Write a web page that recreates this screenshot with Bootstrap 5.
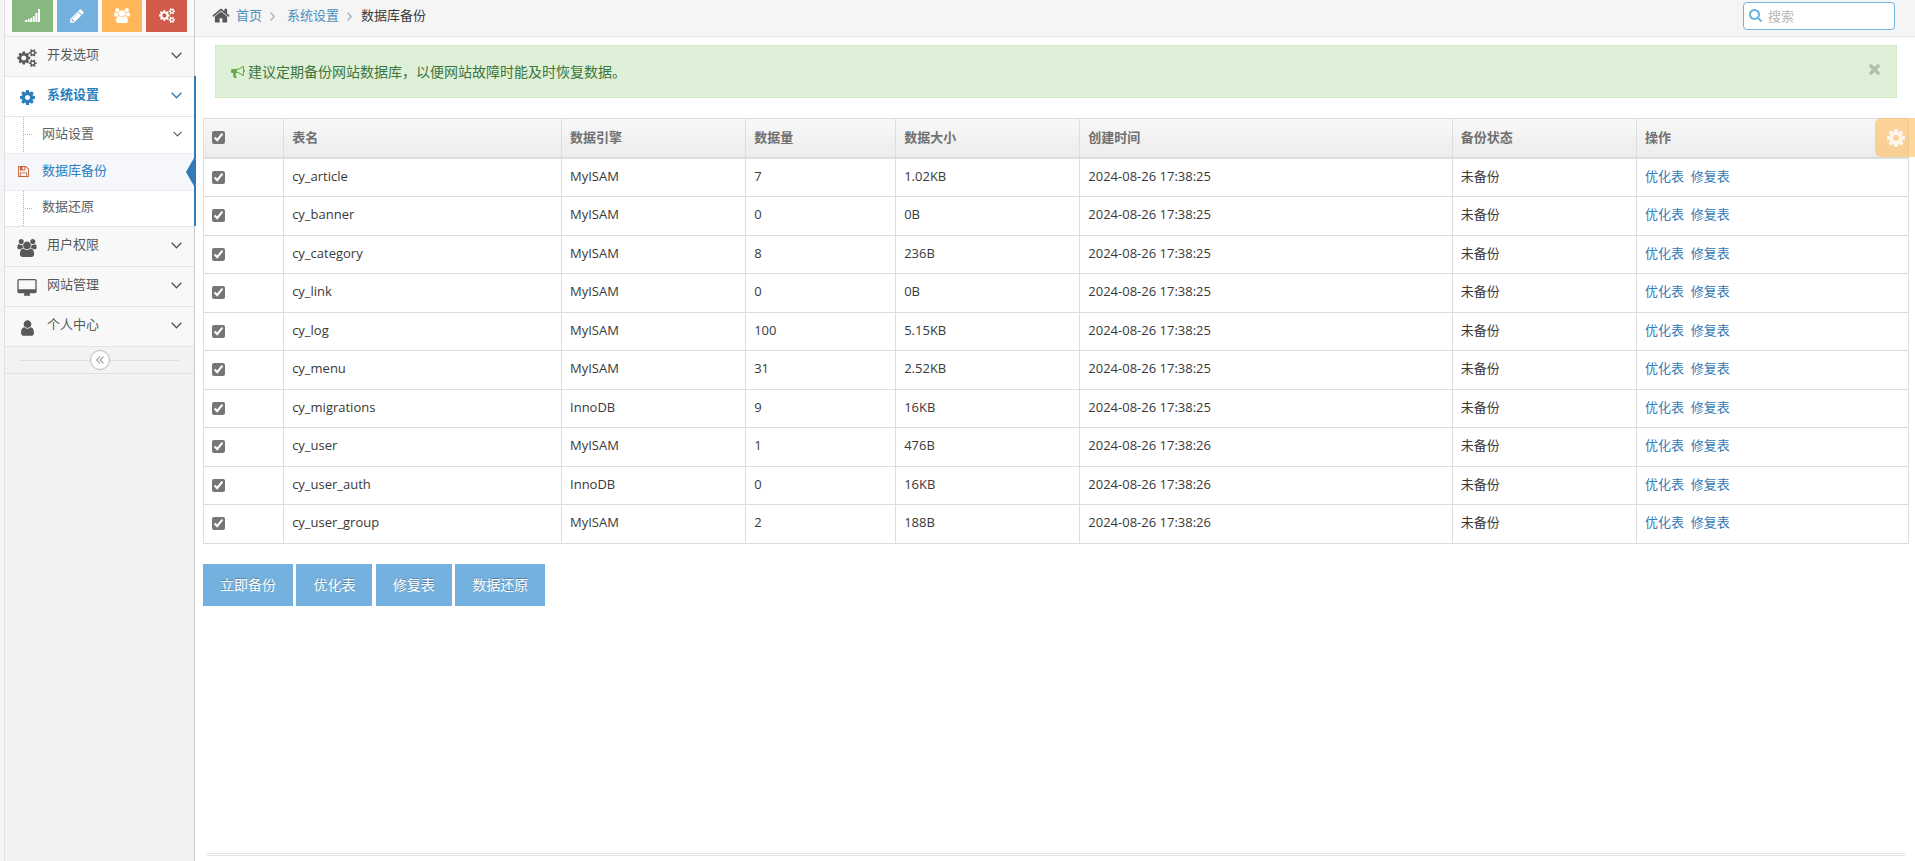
<!DOCTYPE html>
<html lang="zh-CN">
<head>
<meta charset="utf-8">
<meta name="viewport" content="width=device-width, initial-scale=1">
<title>数据库备份</title>
<link href="https://cdn.jsdelivr.net/npm/bootstrap@5.3.0/dist/css/bootstrap.min.css" rel="stylesheet">
<style>
body{font-family:"Open Sans","Noto Sans CJK SC",sans-serif;font-size:13px;line-height:1.5;color:#393939;background:#fff}
a{text-decoration:none;color:#337ab7}
svg{display:block;fill:currentColor;flex:none}
.sidebar{width:195px;flex:none;padding-left:4px;background:#f5f5f5}
.side-inner{min-height:100vh;background:#f2f2f2;border:solid #ccc;border-width:0 1px 0 0;box-shadow:inset 1px 0 #e0e0e0;padding-left:1px}
.shortcuts{height:37px;padding:0 7px;background:#fafafa;border-bottom:1px solid #e5e5e5;gap:4px}
.shortcuts button{width:41px;height:32px;border:0;border-radius:0;padding:0 0 1px;color:#fff;display:flex;align-items:center;justify-content:center}
.sc-green{background:#87b87f}
.sc-blue{background:#75b1de}
.sc-orange{background:#ffb75a}
.sc-red{background:#d15b4a}
.menu-link{height:39px;padding:0 12px 4px 11px;background:#f8f8f8;color:#585858}
.menu-item{border-bottom:1px solid #e5e5e5}
.menu-icon{width:22px;margin-right:9px;display:flex;justify-content:center;padding-top:6px}
.menu-link>svg{margin-top:2px}
.menu-item.open{position:relative}
.menu-item.open::after{content:"";position:absolute;right:-2px;top:-1px;bottom:0;width:2px;background:#337ab7}
.menu-item.open>.menu-link{background:#fff;color:#2b7dbc;font-weight:700}
.submenu{background:#fff;border-top:1px solid #e5e5e5;position:relative}
.submenu::before{content:"";position:absolute;left:18px;top:0;bottom:0;border-left:1px dotted #9dbdd6}
.submenu li{height:37px;position:relative;border-bottom:1px dotted #d5dde5}
.submenu li:last-child{height:35px;border-bottom:0}
.submenu li:not(.active)::before{content:"";position:absolute;left:20px;top:17px;width:7px;border-top:1px dotted #9dbdd6}
.submenu a{height:100%;padding:0 12px 3px 37px;color:#616161}
.submenu .active{background:#f5f7fa}
.submenu .active a{color:#2b7dbc}
.submenu .active svg{position:absolute;left:13px;top:12px;color:#c86139}
.submenu .active::after{content:"";position:absolute;right:0;top:4px;border:solid transparent;border-width:14px 8px 14px 0;border-right-color:#337ab7}
.collapse-bar{height:27px;padding:0 15px;border-bottom:1px solid #e0e0e0}
.collapse-bar::before,.collapse-bar::after{content:"";flex:1;border-top:1px solid #e0e0e0}
.collapse-bar button{width:20px;height:20px;padding:0;border:1px solid #bbb;border-radius:50%;background:#fff;color:#aaa;display:flex;align-items:center;justify-content:center}
.topbar{height:37px;background:#f5f5f5;border-bottom:1px solid #e5e5e5;padding:0 20px 5px 17px}
.topbar a{color:#4c8fbd}
.home-icon{color:#585858;margin-right:6px}
.crumb-sep{color:#b2b6bf;margin:2px 12px 0 8px}
.crumb-sep.last{margin-right:9px}
.searchbox{width:152px}
.searchbox input{width:100%;height:28px;border:1px solid #6fb3e0;border-radius:4px;padding:0 6px 0 24px;font-size:13px;color:#666;background:#fff;outline:0}
.searchbox input::placeholder{color:#b8b8b8}
.searchbox svg{position:absolute;left:6px;top:7px;color:#6fb3e0}
.notice{margin:8px 18px 20px 20px;padding:15px;border:1px solid #d6e9c6;background:#dff0d8;color:#3c763d;font-size:14px;line-height:21px}
.notice-icon{color:#69aa46;margin-right:3px}
.notice button{border:0;background:none;padding:0 1px 4px;color:#b2c0ad}
.content{padding:0 6px 0 8px}
.backup{table-layout:fixed;border-collapse:collapse;width:100%}
.backup th,.backup td{border:1px solid #ddd;padding:9px 8px;white-space:nowrap}
.backup td{padding:8px 8px 10px}
.backup thead tr{background:linear-gradient(#f8f8f8,#ececec);color:#707070}
.backup th{border-bottom-width:2px;font-weight:700}
.backup input{width:13px;height:13px;margin:0;display:block;accent-color:#767676}
.backup td input{margin-top:2px}
.settings{position:absolute;right:0;top:0;width:40px;height:39px;border:0;border-radius:6px 0 0 6px;background:rgba(255,180,75,.55);color:#fbf5ec;display:flex;align-items:center;padding:0 0 0 12px}
.actions{padding-top:20px}
.actions button{height:42px;padding:0 17px;border:0;border-radius:0;background:#75b1de;color:#fff;font-size:14px;line-height:22px;text-shadow:0 -1px 0 rgba(0,0,0,.25)}
.foot{margin:0 10px 0 12px;height:8px;border-top:3px double #e5e5e5}
</style>
</head>
<body>
<svg class="d-none" aria-hidden="true">
<symbol id="pencil" viewBox="0 0 1792 1792"><path d="M491 1536l91-91-235-235-91 91v107h128v128h107zm523-928q0-22-22-22-10 0-17 7l-542 542q-7 7-7 17 0 22 22 22 10 0 17-7l542-542q7-7 7-17zm-54-192l416 416-832 832h-416v-416zm683 96q0 53-37 90l-166 166-416-416 166-165q36-38 90-38 53 0 91 38l235 234q37 39 37 91z"/></symbol>
<symbol id="users" viewBox="-64 0 1920 1792"><path d="M529 896q-162 5-265 128h-134q-82 0-138-40.500t-56-118.500q0-353 124-353 6 0 43.500 21t97.500 42.500 119 21.500q67 0 133-23-5 37-5 66 0 139 81 256zm1071 637q0 120-73 189.500t-194 69.500h-874q-121 0-194-69.500t-73-189.500q0-53 3.500-103.500t14-109 26.500-108.500 43-97.500 62-81 85.500-53.500 111.500-20q10 0 43 21.500t73 48 107 48 135 21.500 135-21.500 107-48 73-48 43-21.500q61 0 111.500 20t85.500 53.500 62 81 43 97.500 26.500 108.500 14 109 3.500 103.500zm-1024-1277q0 106-75 181t-181 75-181-75-75-181 75-181 181-75 181 75 75 181zm704 384q0 159-112.500 271.500t-271.500 112.500-271.500-112.500-112.500-271.500 112.500-271.500 271.500-112.500 271.500 112.500 112.500 271.500zm576 225q0 78-56 118.500t-138 40.500h-134q-103-123-265-128 81-117 81-256 0-29-5-66 66 23 133 23 59 0 119-21.500t97.500-42.500 43.500-21q124 0 124 353zm-128-609q0 106-75 181t-181 75-181-75-75-181 75-181 181-75 181 75 75 181z"/></symbol>
<symbol id="cogs" viewBox="-64 0 1920 1792"><path d="M832 896q0-106-75-181t-181-75-181 75-75 181 75 181 181 75 181-75 75-181zm768 512q0-52-38-90t-90-38-90 38-38 90q0 53 37.500 90.500t90.500 37.500 90.500-37.500 37.500-90.500zm0-1024q0-52-38-90t-90-38-90 38-38 90q0 53 37.500 90.500t90.500 37.500 90.500-37.500 37.500-90.500zm-384 421v185q0 10-7 19.500t-16 10.500l-155 24q-11 35-32 76 34 48 90 115 7 11 7 20 0 12-7 19-23 30-82.500 89.500t-78.500 59.500q-11 0-21-7l-115-90q-37 19-77 31-11 108-23 155-7 24-30 24h-186q-11 0-20-7.500t-10-17.500l-23-153q-34-10-75-31l-118 89q-7 7-20 7-11 0-21-8-144-133-144-160 0-9 7-19 10-14 41-53t47-61q-23-44-35-82l-152-24q-10-1-17-9.500t-7-19.500v-185q0-10 7-19.500t16-10.500l155-24q11-35 32-76-34-48-90-115-7-11-7-20 0-12 7-20 22-30 82-89t79-59q11 0 21 7l115 90q34-18 77-32 11-108 23-154 7-24 30-24h186q11 0 20 7.500t10 17.500l23 153q34 10 75 31l118-89q8-7 20-7 11 0 21 8 144 133 144 160 0 8-7 19-12 16-42 54t-45 60q23 48 34 82l152 23q10 2 17 10.500t7 19.500zm640 533v140q0 16-149 31-12 27-30 52 51 113 51 138 0 4-4 7-122 71-124 71-8 0-46-47t-52-68q-20 2-30 2t-30-2q-14 21-52 68t-46 47q-2 0-124-71-4-3-4-7 0-25 51-138-18-25-30-52-149-15-149-31v-140q0-16 149-31 13-29 30-52-51-113-51-138 0-4 4-7 4-2 35-20t59-34 30-16q8 0 46 46.500t52 67.500q20-2 30-2t30 2q51-71 92-112l6-2q4 0 124 70 4 3 4 7 0 25-51 138 17 23 30 52 149 15 149 31zm0-1024v140q0 16-149 31-12 27-30 52 51 113 51 138 0 4-4 7-122 71-124 71-8 0-46-47t-52-68q-20 2-30 2t-30-2q-14 21-52 68t-46 47q-2 0-124-71-4-3-4-7 0-25 51-138-18-25-30-52-149-15-149-31v-140q0-16 149-31 13-29 30-52-51-113-51-138 0-4 4-7 4-2 35-20t59-34 30-16q8 0 46 46.500t52 67.500q20-2 30-2t30 2q51-71 92-112l6-2q4 0 124 70 4 3 4 7 0 25-51 138 17 23 30 52 149 15 149 31z"/></symbol>
<symbol id="cog" viewBox="128 128 1536 1536"><path d="M1152 896q0-106-75-181t-181-75-181 75-75 181 75 181 181 75 181-75 75-181zm512-109v222q0 12-8 23t-20 13l-185 28q-19 54-39 91 35 50 107 138 10 12 10 25t-9 23q-27 37-99 108t-94 71q-12 0-26-9l-138-108q-44 23-91 38-16 136-29 186-7 28-36 28h-222q-14 0-24.500-8.500t-11.500-21.500l-28-184q-49-16-90-37l-141 107q-10 9-25 9-14 0-25-11-126-114-165-168-7-10-7-23 0-12 8-23 15-21 51-66.500t54-70.500q-27-50-41-99l-183-27q-13-2-21-12.500t-8-23.500v-222q0-12 8-23t19-13l186-28q14-46 39-92-40-57-107-138-10-12-10-24 0-10 9-23 26-36 98.500-107.500t94.500-71.500q13 0 26 10l138 107q44-23 91-38 16-136 29-186 7-28 36-28h222q14 0 24.500 8.500t11.500 21.500l28 184q49 16 90 37l142-107q9-9 24-9 13 0 25 10 129 119 165 170 7 8 7 22 0 12-8 23-15 21-51 66.500t-54 70.500q26 50 41 98l183 28q13 2 21 12.500t8 23.500z"/></symbol>
<symbol id="desktop" viewBox="-64 0 1920 1792"><path d="M1728 992v-832q0-13-9.500-22.500t-22.500-9.500h-1600q-13 0-22.500 9.500t-9.500 22.500v832q0 13 9.500 22.500t22.500 9.500h1600q13 0 22.500-9.500t9.500-22.500zm128-832v1088q0 66-47 113t-113 47h-544q0 37 16 77.500t32 71 16 43.500q0 26-19 45t-45 19h-512q-26 0-45-19t-19-45q0-14 16-44t32-70 16-78h-544q-66 0-113-47t-47-113v-1088q0-66 47-113t113-47h1600q66 0 113 47t47 113z"/></symbol>
<symbol id="user" viewBox="0 0 1792 1792"><path d="M1536 1399q0 109-62.500 187t-150.500 78h-854q-88 0-150.500-78t-62.500-187q0-85 8.500-160.500t31.500-152 58.500-131 94-89 134.500-34.500q131 128 313 128t313-128q76 0 134.500 34.500t94 89 58.500 131 31.500 152 8.500 160.500zm-256-887q0 159-112.500 271.500t-271.500 112.500-271.500-112.500-112.500-271.500 112.500-271.500 271.500-112.500 271.500 112.500 112.500 271.500z"/></symbol>
<symbol id="home" viewBox="64 180 1664 1408"><path d="M1472 992v480q0 26-19 45t-45 19h-384v-384h-256v384h-384q-26 0-45-19t-19-45v-480q0-1 .5-3t.5-3l575-474 575 474q1 2 1 6zm223-69l-62 74q-8 9-21 11h-3q-13 0-21-7l-692-577-692 577q-12 8-24 7-13-2-21-11l-62-74q-8-10-7-23.500t11-21.500l719-599q32-26 76-26t76 26l244 204v-195q0-14 9-23t23-9h192q14 0 23 9t9 23v408l219 182q10 8 11 21.500t-7 23.500z"/></symbol>
<symbol id="floppy" viewBox="128 128 1536 1536"><path d="M512 1536h768v-384h-768v384zm896 0h128v-896q0-14-10-38.500t-20-34.500l-281-281q-10-10-34-20t-39-10v416q0 40-28 68t-68 28h-576q-40 0-68-28t-28-68v-416h-128v1280h128v-416q0-40 28-68t68-28h832q40 0 68 28t28 68v416zm-384-928v-320q0-13-9.500-22.500t-22.500-9.500h-192q-13 0-22.500 9.500t-9.500 22.500v320q0 13 9.500 22.500t22.500 9.500h192q13 0 22.500-9.500t9.500-22.500zm640 32v928q0 40-28 68t-68 28h-1344q-40 0-68-28t-28-68v-1344q0-40 28-68t68-28h928q40 0 88 20t76 48l280 280q28 28 48 76t20 88z"/></symbol>
<symbol id="bullhorn" viewBox="0 0 1792 1792"><path d="M1664 640q53 0 90.500 37.500t37.500 90.500-37.500 90.500-90.500 37.500v384q0 52-38 90t-90 38q-417-347-812-380-58 19-91 66t-31 100.500 40 92.500q-20 33-23 65.500t6 58 33.500 55 48 50 61.500 50.500q-29 58-111.500 83t-168.500 11.500-132-55.500q-7-23-29.500-87.500t-32-94.500-23-89-15-101 3.500-98.500 22-110.500h-122q-66 0-113-47t-47-113v-192q0-66 47-113t113-47h480q435 0 896-384 52 0 90 38t38 90v384zm-128 604v-954q-394 302-768 343v270q377 42 768 341z"/></symbol>
<symbol id="times" viewBox="302 366 1188 1188"><path d="M1490 1322q0 40-28 68l-136 136q-28 28-68 28t-68-28l-294-294-294 294q-28 28-68 28t-68-28l-136-136q-28-28-28-68t28-68l294-294-294-294q-28-28-28-68t28-68l136-136q28-28 68-28t68 28l294 294 294-294q28-28 68-28t68 28l136 136q28 28 28 68t-28 68l-294 294 294 294q28 28 28 68z"/></symbol>
<symbol id="search" viewBox="64 128 1664 1664"><path d="M1216 832q0-185-131.500-316.500t-316.500-131.500-316.500 131.500-131.500 316.500 131.500 316.500 316.500 131.500 316.500-131.500 131.500-316.500zm512 832q0 52-38 90t-90 38q-54 0-90-38l-343-342q-179 124-399 124-143 0-273.500-55.500t-225-150-150-225-55.500-273.500 55.500-273.500 150-225 225-150 273.500-55.500 273.500 55.500 225 150 150 225 55.500 273.500q0 220-124 399l343 343q37 37 37 90z"/></symbol>
<symbol id="down" viewBox="0 0 10 6"><path d="M.6.6L5 5 9.400.6" fill="none" stroke="currentColor" stroke-width="1.300"/></symbol>
<symbol id="right" viewBox="0 0 5 9"><path d="M.6.600L4.200 4.500.6 8.400" fill="none" stroke="currentColor" stroke-width="1.500"/></symbol>
</svg>

<div class="d-flex min-vh-100">
  <aside class="sidebar">
    <div class="side-inner">
      <div class="shortcuts d-flex">
        <button type="button" aria-label="统计" class="sc-green"><svg width="15" height="13" viewBox="0 0 15 13"><path d="M0 11h2v2H0zM2.600 10h2v3h-2zM5.200 9h2v4h-2zM7.800 7h2v6h-2zM10.400 4h2v9h-2zM13 0h2v13h-2z"/></svg></button>
        <button type="button" aria-label="编辑" class="sc-blue"><svg width="16" height="16"><use href="#pencil"/></svg></button>
        <button type="button" aria-label="用户" class="sc-orange"><svg width="16" height="15"><use href="#users"/></svg></button>
        <button type="button" aria-label="设置" class="sc-red"><svg width="16" height="15"><use href="#cogs"/></svg></button>
      </div>
      <nav>
        <ul class="list-unstyled m-0">
          <li class="menu-item"><a href="#" class="menu-link d-flex align-items-center"><span class="menu-icon"><svg width="20" height="18"><use href="#cogs"/></svg></span><span class="flex-grow-1">开发选项</span><svg width="11" height="7"><use href="#down"/></svg></a></li>
          <li class="menu-item open"><a href="#" class="menu-link d-flex align-items-center"><span class="menu-icon"><svg width="15" height="15"><use href="#cog"/></svg></span><span class="flex-grow-1">系统设置</span><svg width="11" height="7"><use href="#down"/></svg></a>
            <ul class="submenu list-unstyled m-0">
              <li><a href="#" class="d-flex align-items-center"><span class="flex-grow-1">网站设置</span><svg width="9" height="6"><use href="#down"/></svg></a></li>
              <li class="active"><a href="#" class="d-flex align-items-center"><svg width="11" height="11"><use href="#floppy"/></svg>数据库备份</a></li>
              <li><a href="#" class="d-flex align-items-center">数据还原</a></li>
            </ul>
          </li>
          <li class="menu-item"><a href="#" class="menu-link d-flex align-items-center"><span class="menu-icon"><svg width="20" height="18"><use href="#users"/></svg></span><span class="flex-grow-1">用户权限</span><svg width="11" height="7"><use href="#down"/></svg></a></li>
          <li class="menu-item"><a href="#" class="menu-link d-flex align-items-center"><span class="menu-icon"><svg width="20" height="18"><use href="#desktop"/></svg></span><span class="flex-grow-1">网站管理</span><svg width="11" height="7"><use href="#down"/></svg></a></li>
          <li class="menu-item"><a href="#" class="menu-link d-flex align-items-center"><span class="menu-icon"><svg width="19" height="18"><use href="#user"/></svg></span><span class="flex-grow-1">个人中心</span><svg width="11" height="7"><use href="#down"/></svg></a></li>
        </ul>
      </nav>
      <div class="collapse-bar d-flex align-items-center"><button type="button" aria-label="收起菜单"><svg width="8" height="8" viewBox="0 0 8 8"><path d="M4 .5L.7 4 4 7.500M7.500.5L4.200 4l3.300 3.500" fill="none" stroke="currentColor" stroke-width="1.200"/></svg></button></div>
    </div>
  </aside>

  <main class="flex-grow-1 d-flex flex-column overflow-hidden">
    <header class="topbar d-flex align-items-center justify-content-between">
      <nav class="d-flex align-items-center" aria-label="导航路径">
        <svg width="18" height="15" class="home-icon"><use href="#home"/></svg>
        <a href="#">首页</a><svg class="crumb-sep" width="5" height="9"><use href="#right"/></svg>
        <a href="#">系统设置</a><svg class="crumb-sep last" width="5" height="9"><use href="#right"/></svg>
        <span>数据库备份</span>
      </nav>
      <form class="searchbox position-relative"><svg width="13" height="13"><use href="#search"/></svg><input type="text" placeholder="搜索" aria-label="搜索"></form>
    </header>

    <div class="notice d-flex align-items-center" role="alert">
      <svg width="14" height="14" class="notice-icon"><use href="#bullhorn"/></svg>
      <span class="flex-grow-1">建议定期备份网站数据库，以便网站故障时能及时恢复数据。</span>
      <button type="button" aria-label="关闭"><svg width="11" height="11"><use href="#times"/></svg></button>
    </div>

    <div class="position-relative">
      <div class="content">
        <table class="backup">
          <colgroup><col style="width:4.7%"><col style="width:16.3%"><col style="width:10.8%"><col style="width:8.8%"><col style="width:10.8%"><col style="width:21.850%"><col style="width:10.8%"><col></colgroup>
          <thead><tr><th><input type="checkbox" checked aria-label="全选"></th><th>表名</th><th>数据引擎</th><th>数据量</th><th>数据大小</th><th>创建时间</th><th>备份状态</th><th>操作</th></tr></thead>
          <tbody>
            <tr><td><input type="checkbox" checked aria-label="cy_article"></td><td>cy_article</td><td>MyISAM</td><td>7</td><td>1.02KB</td><td>2024-08-26 17:38:25</td><td>未备份</td><td><a href="#">优化表</a>&nbsp; <a href="#">修复表</a></td></tr>
            <tr><td><input type="checkbox" checked aria-label="cy_banner"></td><td>cy_banner</td><td>MyISAM</td><td>0</td><td>0B</td><td>2024-08-26 17:38:25</td><td>未备份</td><td><a href="#">优化表</a>&nbsp; <a href="#">修复表</a></td></tr>
            <tr><td><input type="checkbox" checked aria-label="cy_category"></td><td>cy_category</td><td>MyISAM</td><td>8</td><td>236B</td><td>2024-08-26 17:38:25</td><td>未备份</td><td><a href="#">优化表</a>&nbsp; <a href="#">修复表</a></td></tr>
            <tr><td><input type="checkbox" checked aria-label="cy_link"></td><td>cy_link</td><td>MyISAM</td><td>0</td><td>0B</td><td>2024-08-26 17:38:25</td><td>未备份</td><td><a href="#">优化表</a>&nbsp; <a href="#">修复表</a></td></tr>
            <tr><td><input type="checkbox" checked aria-label="cy_log"></td><td>cy_log</td><td>MyISAM</td><td>100</td><td>5.15KB</td><td>2024-08-26 17:38:25</td><td>未备份</td><td><a href="#">优化表</a>&nbsp; <a href="#">修复表</a></td></tr>
            <tr><td><input type="checkbox" checked aria-label="cy_menu"></td><td>cy_menu</td><td>MyISAM</td><td>31</td><td>2.52KB</td><td>2024-08-26 17:38:25</td><td>未备份</td><td><a href="#">优化表</a>&nbsp; <a href="#">修复表</a></td></tr>
            <tr><td><input type="checkbox" checked aria-label="cy_migrations"></td><td>cy_migrations</td><td>InnoDB</td><td>9</td><td>16KB</td><td>2024-08-26 17:38:25</td><td>未备份</td><td><a href="#">优化表</a>&nbsp; <a href="#">修复表</a></td></tr>
            <tr><td><input type="checkbox" checked aria-label="cy_user"></td><td>cy_user</td><td>MyISAM</td><td>1</td><td>476B</td><td>2024-08-26 17:38:26</td><td>未备份</td><td><a href="#">优化表</a>&nbsp; <a href="#">修复表</a></td></tr>
            <tr><td><input type="checkbox" checked aria-label="cy_user_auth"></td><td>cy_user_auth</td><td>InnoDB</td><td>0</td><td>16KB</td><td>2024-08-26 17:38:26</td><td>未备份</td><td><a href="#">优化表</a>&nbsp; <a href="#">修复表</a></td></tr>
            <tr><td><input type="checkbox" checked aria-label="cy_user_group"></td><td>cy_user_group</td><td>MyISAM</td><td>2</td><td>188B</td><td>2024-08-26 17:38:26</td><td>未备份</td><td><a href="#">优化表</a>&nbsp; <a href="#">修复表</a></td></tr>
          </tbody>
        </table>
        <div class="actions">
          <button type="button">立即备份</button>
          <button type="button">优化表</button>
          <button type="button">修复表</button>
          <button type="button">数据还原</button>
        </div>
      </div>
      <button type="button" class="settings" aria-label="页面设置"><svg width="18" height="18"><use href="#cog"/></svg></button>
    </div>
    <footer class="foot mt-auto"></footer>
  </main>
</div>
<script src="https://cdn.jsdelivr.net/npm/bootstrap@5.3.0/dist/js/bootstrap.bundle.min.js"></script>
</body>
</html>
